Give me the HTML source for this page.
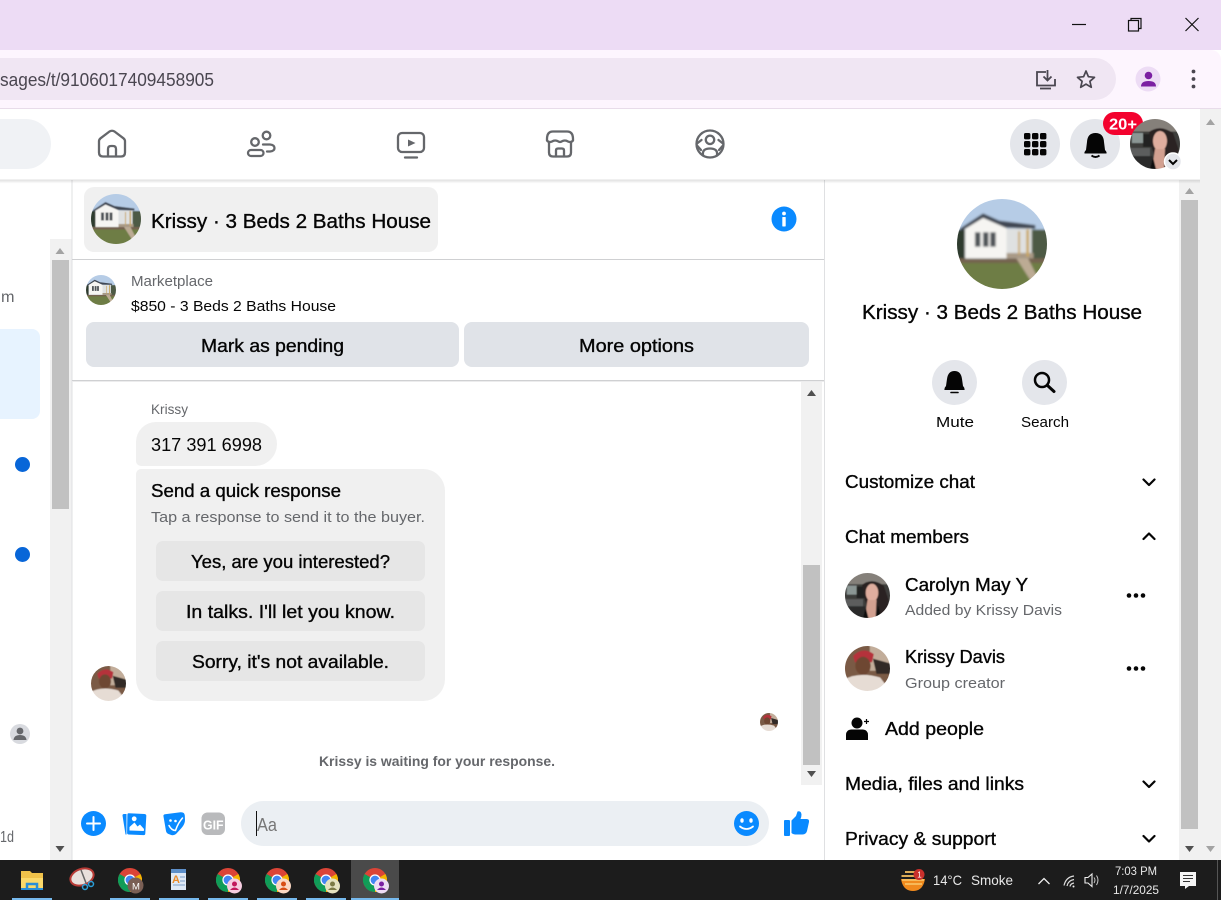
<!DOCTYPE html>
<html><head><meta charset="utf-8"><title>Messenger</title>
<style>
html,body{margin:0;padding:0;width:1221px;height:900px;overflow:hidden;background:#fff}
svg{display:block}
text{font-family:"Liberation Sans",sans-serif;fill:#050505}
.sb{stroke:#050505;stroke-width:.35}
.g{fill:#65676b}
.w{fill:#fff}
</style></head><body>
<svg width="1221" height="900" viewBox="0 0 1221 900" xmlns="http://www.w3.org/2000/svg">
<defs>
<clipPath id="cc"><circle cx="50" cy="50" r="50"/></clipPath>
<filter id="soft" x="-10%" y="-10%" width="120%" height="120%"><feGaussianBlur stdDeviation="1.3"/></filter>
<linearGradient id="shadow" x1="0" y1="0" x2="0" y2="1"><stop offset="0" stop-color="#000" stop-opacity=".13"/><stop offset="1" stop-color="#000" stop-opacity="0"/></linearGradient>
<symbol id="house" viewBox="0 0 100 100"><g clip-path="url(#cc)"><g filter="url(#soft)">
<rect x="-5" y="-5" width="110" height="110" fill="#b6cce6"/>
<rect x="80" y="34" width="25" height="34" fill="#4e5a45"/>
<rect x="-5" y="34" width="14" height="34" fill="#2f3a2e"/>
<rect x="-5" y="69" width="110" height="36" fill="#6e7d44"/>
<rect x="-5" y="66" width="110" height="5" fill="#75634f"/>
<polygon points="66,66 79,66 90,88 82,91" fill="#bcab94"/>
<polygon points="9,32 29,19 55,31 55,66 9,66" fill="#f6f5f2"/>
<polygon points="3,33 29,16 47,24 87,29 87,33 54,32 29,21 6,35" fill="#3f4653"/>
<rect x="55" y="33" width="28" height="27" fill="#dfe1e1"/>
<rect x="55" y="60" width="30" height="6" fill="#a99a86"/>
<rect x="20" y="37" width="6" height="16" fill="#4f5459"/><rect x="29" y="37" width="6" height="16" fill="#4f5459"/><rect x="37" y="37" width="6" height="16" fill="#4f5459"/>
<rect x="77" y="34" width="3" height="30" fill="#c9a661"/>
<rect x="68" y="36" width="2" height="26" fill="#c9a661"/>
</g></g></symbol>
<symbol id="carolyn" viewBox="0 0 100 100"><g clip-path="url(#cc)"><g filter="url(#soft)">
<rect x="-5" y="-5" width="110" height="110" fill="#3d3c3b"/>
<rect x="-5" y="-5" width="110" height="30" fill="#85807a"/>
<rect x="4" y="28" width="22" height="20" fill="#8b9694"/>
<rect x="26" y="30" width="18" height="26" fill="#222"/>
<rect x="-5" y="58" width="45" height="16" fill="#5c5d5d"/>
<rect x="-5" y="74" width="50" height="32" fill="#2a2a2a"/>
<path d="M38 26Q60 10 86 28L97 60 94 80 72 100H60L44 60Z" fill="#2a2220"/>
<ellipse cx="60" cy="44" rx="14" ry="20" fill="#dfad9e"/>
<path d="M50 60H70L68 100H44Z" fill="#d2a090"/>
<path d="M40 100L46 76 52 100Z" fill="#111"/>
<path d="M68 100L74 72 80 100Z" fill="#111"/>
</g></g></symbol>
<symbol id="krissy" viewBox="0 0 100 100"><g clip-path="url(#cc)"><g filter="url(#soft)">
<rect x="-5" y="-5" width="110" height="110" fill="#7a5a44"/>
<rect x="55" y="-5" width="50" height="60" fill="#c2ad9a"/>
<path d="M62 28L105 40 105 62 70 62Z" fill="#332a25"/>
<path d="M18 22Q40 0 64 18L60 36H22Z" fill="#b5303a"/>
<ellipse cx="40" cy="44" rx="17" ry="20" fill="#6e4632"/>
<path d="M-5 76Q30 56 78 70L105 105H-5Z" fill="#e6dcd4"/>
</g></g></symbol>
<symbol id="chrome" viewBox="0 0 24 24">
<circle cx="12" cy="12" r="12" fill="#db4437"/>
<path d="M12 12L1.6 18A12 12 0 0 0 12 24Z" fill="#0f9d58"/>
<path d="M1.6 18A12 12 0 0 1 1.6 6L12 12Z" fill="#0f9d58"/>
<path d="M12 12L22.4 6A12 12 0 0 1 12 24Z" fill="#f4b400"/>
<circle cx="12" cy="12" r="5.6" fill="#fff"/><circle cx="12" cy="12" r="4.4" fill="#4285f4"/>
</symbol>
</defs>

<!-- chrome frame -->
<rect width="1221" height="50" fill="#eddcf5"/>
<path d="M0 50H1211a10 10 0 0 1 10 10V108H0Z" fill="#fdf5fe"/>
<rect y="108" width="1221" height="1" fill="#e8dcea"/>
<path d="M0 58H1095a21 21 0 0 1 0 42H0Z" fill="#f0e6f3"/>
<text x="0" y="86" font-size="18" textLength="214" lengthAdjust="spacingAndGlyphs" style="fill:#4a4650">sages/t/9106017409458905</text>
<path d="M1072 24.500H1086" stroke="#111" stroke-width="1.200"/>
<rect x="1128.500" y="20.500" width="10" height="10.500" fill="none" stroke="#111" stroke-width="1.200"/>
<path d="M1131 20V18.500H1141V28.500H1139" fill="none" stroke="#111" stroke-width="1.200"/>
<path d="M1185.500 18L1198.500 31M1198.500 18L1185.500 31" stroke="#111" stroke-width="1.200"/>
<path d="M1046 72H1037V85.500H1055V79" fill="none" stroke="#4a4650" stroke-width="1.800"/>
<path d="M1040 88.500H1051" stroke="#4a4650" stroke-width="1.800"/>
<path d="M1047.500 70V80M1043.500 76.500L1047.500 80.500 1051.500 76.500" fill="none" stroke="#4a4650" stroke-width="1.800"/>
<path d="M1086 71L1088.400 76.700 1094.500 77.300 1089.900 81.300 1091.300 87.300 1086 84.100 1080.700 87.300 1082.100 81.300 1077.500 77.300 1083.600 76.700Z" fill="none" stroke="#4a4650" stroke-width="1.700" stroke-linejoin="round"/>
<circle cx="1148" cy="79" r="12.500" fill="#eddcf5"/>
<circle cx="1148.500" cy="75.500" r="3.800" fill="#7b1fa2"/>
<path d="M1141 86.500Q1141 81 1148.500 81T1156 86.500Z" fill="#7b1fa2"/>
<circle cx="1193.500" cy="71.500" r="1.900" fill="#4a4650"/><circle cx="1193.500" cy="79" r="1.900" fill="#4a4650"/><circle cx="1193.500" cy="86.500" r="1.900" fill="#4a4650"/>

<!-- page scrollbar -->
<rect x="1200" y="109" width="21" height="751" fill="#f1f1f1"/>
<path d="M1206 125L1210.500 119 1215 125Z" fill="#a3a3a3"/>
<path d="M1206 846L1210.500 852 1215 846Z" fill="#a3a3a3"/>

<!-- left column -->
<rect x="50" y="239" width="21.500" height="621" fill="#f1f1f1"/>
<rect x="52" y="260" width="17" height="249" fill="#c1c1c1"/>
<path d="M55.500 254L60 248 64.500 254Z" fill="#a3a3a3"/>
<path d="M55.500 846L60 852 64.500 846Z" fill="#505050"/>
<rect x="71.500" y="180" width="1" height="680" fill="#dfe0e2"/>
<path d="M0 329H32a8 8 0 0 1 8 8V411a8 8 0 0 1-8 8H0Z" fill="#e7f3ff"/>
<circle cx="22.500" cy="464.500" r="7.500" fill="#0866d8"/>
<circle cx="22.500" cy="554.500" r="7.500" fill="#0866d8"/>
<circle cx="20" cy="734" r="10" fill="#d8dadf"/>
<circle cx="20" cy="731" r="3.400" fill="#65676b"/>
<path d="M13.500 740Q14 735 20 735T26.500 740Z" fill="#65676b"/>
<text x="1" y="302" font-size="16" textLength="13.500" lengthAdjust="spacingAndGlyphs" class="g">m</text>
<text x="0" y="842" font-size="16" textLength="14" lengthAdjust="spacingAndGlyphs" class="g">1d</text>

<!-- top nav -->
<rect x="0" y="109" width="1200" height="70.500" fill="#fff"/>
<path d="M0 119H26a25 25 0 0 1 0 50H0Z" fill="#f0f2f5"/>
<g fill="none" stroke="#65676b" stroke-width="2.300" stroke-linejoin="round" stroke-linecap="round">
<path d="M99 141.500Q99 139.500 100.500 138.300L109.500 131.500Q112 130 114.500 131.500L123.500 138.300Q125 139.500 125 141.500V152.500Q125 156.500 121 156.500H103Q99 156.500 99 152.500Z"/>
<path d="M108 156.500V149Q108 146 111 146H113Q116 146 116 149V156.500"/>
<circle cx="266.500" cy="135.500" r="3.800"/>
<circle cx="255" cy="142" r="3.800"/>
<rect x="248" y="150" width="15.500" height="6" rx="3"/>
<path d="M263 144.500H270Q274.500 145 274.500 148T270 151.500H267"/>
<rect x="398" y="133" width="26" height="19" rx="4"/>
<path d="M405 157.500H417"/>
<path d="M547 139Q547 131.500 553 131.500H567Q573 131.500 573 139V140.500Q571 143 568 141.500Q565 139.500 561.500 141.500Q560 142.500 558.500 141.500Q555 139.500 552 141.500Q549 143 547 140.500Z"/>
<path d="M549 143V152.500Q549 156.500 553 156.500H567Q571 156.500 571 152.500V143"/>
<path d="M556 156.500V150.500Q556 148.500 558 148.500H562Q564 148.500 564 150.500V156.500"/>
<circle cx="710" cy="144" r="13.500"/>
<circle cx="710" cy="139.800" r="4.200"/>
<path d="M703 155Q702 148.500 710 148.500T717 155"/>
<path d="M697 143.500L701.500 140M723 143.500L718.500 140M697 145.500L701 150M723 145.500L719 150"/>
</g>
<path d="M408 139.500L415.500 143 408 146.500Z" fill="#65676b"/>
<circle cx="1035" cy="144" r="25" fill="#e4e6eb"/>
<g fill="#050505">
<rect x="1024" y="133" width="6.400" height="6.400" rx="1.600"/><rect x="1032" y="133" width="6.400" height="6.400" rx="1.600"/><rect x="1040" y="133" width="6.400" height="6.400" rx="1.600"/>
<rect x="1024" y="141" width="6.400" height="6.400" rx="1.600"/><rect x="1032" y="141" width="6.400" height="6.400" rx="1.600"/><rect x="1040" y="141" width="6.400" height="6.400" rx="1.600"/>
<rect x="1024" y="149" width="6.400" height="6.400" rx="1.600"/><rect x="1032" y="149" width="6.400" height="6.400" rx="1.600"/><rect x="1040" y="149" width="6.400" height="6.400" rx="1.600"/>
</g>
<circle cx="1095" cy="144" r="25" fill="#e4e6eb"/>
<path d="M1095.500 133Q1103.500 133 1104 142L1105 150Q1107 152 1106.500 153.500H1084.500Q1084 152 1086 150L1087 142Q1087.500 133 1095.500 133Z" fill="#050505"/>
<path d="M1091.500 155.500Q1095.500 158.500 1099.500 155.500" fill="none" stroke="#050505" stroke-width="2"/>
<rect x="1103" y="112" width="40" height="23" rx="11.500" fill="#f3022e"/>
<use href="#carolyn" x="1130" y="119" width="50" height="50"/>
<text x="1109" y="129.500" font-size="16" font-weight="700" textLength="28" lengthAdjust="spacingAndGlyphs" class="w">20+</text>
<circle cx="1173" cy="161.500" r="8.500" fill="#e4e6eb" stroke="#fff" stroke-width="1.500"/>
<path d="M1169 160L1173 164 1177 160" fill="none" stroke="#050505" stroke-width="2"/>

<!-- chat header -->
<rect x="84" y="187" width="354" height="65" rx="10" fill="#f0f0f0"/>
<use href="#house" x="91" y="194" width="50" height="50"/>
<text x="151" y="228" font-size="20" textLength="280" lengthAdjust="spacingAndGlyphs" class="sb">Krissy · 3 Beds 2 Baths House</text>
<circle cx="784" cy="219" r="12.500" fill="#0a8aff"/>
<circle cx="784" cy="213.500" r="1.900" fill="#fff"/>
<rect x="782.300" y="217" width="3.400" height="9.500" rx=".6" fill="#fff"/>
<rect x="72" y="259" width="752" height="1" fill="#cfd0d2"/>
<use href="#house" x="86" y="275" width="30" height="30"/>
<text x="131" y="286" font-size="14.500" textLength="82" lengthAdjust="spacingAndGlyphs" class="g">Marketplace</text>
<text x="131" y="311" font-size="15" textLength="205" lengthAdjust="spacingAndGlyphs">$850 - 3 Beds 2 Baths House</text>
<rect x="86" y="322" width="373" height="45" rx="8" fill="#e0e3e8"/>
<rect x="464" y="322" width="345" height="45" rx="8" fill="#e0e3e8"/>
<text x="201" y="352" font-size="18" textLength="143" lengthAdjust="spacingAndGlyphs" class="sb">Mark as pending</text>
<text x="579" y="352" font-size="18" textLength="115" lengthAdjust="spacingAndGlyphs" class="sb">More options</text>
<rect x="72" y="380" width="752" height="1" fill="#cfd0d2"/>
<rect x="72" y="381" width="752" height="1" fill="#ececed"/>
<rect x="824" y="180" width="1" height="680" fill="#dfe0e2"/>

<!-- messages -->
<rect x="801" y="382" width="21" height="403" fill="#f1f1f1"/>
<rect x="803" y="565" width="17" height="200" fill="#c1c1c1"/>
<path d="M807 396L811.500 390 816 396Z" fill="#505050"/>
<path d="M807 771L811.500 777 816 771Z" fill="#505050"/>
<text x="151" y="414" font-size="14" textLength="37" lengthAdjust="spacingAndGlyphs" class="g">Krissy</text>
<path d="M156 422H255a22 22 0 0 1 0 44H141a5 5 0 0 1-5-5V442a20 20 0 0 1 20-20Z" fill="#f0f0f0"/>
<text x="151" y="451" font-size="18" textLength="111" lengthAdjust="spacingAndGlyphs">317 391 6998</text>
<path d="M141 469H423a22 22 0 0 1 22 22V679a22 22 0 0 1-22 22H158a22 22 0 0 1-22-22V474a5 5 0 0 1 5-5Z" fill="#f0f0f0"/>
<text x="151" y="497" font-size="18" textLength="190" lengthAdjust="spacingAndGlyphs" class="sb">Send a quick response</text>
<text x="151" y="522" font-size="15" textLength="274" lengthAdjust="spacingAndGlyphs" class="g">Tap a response to send it to the buyer.</text>
<rect x="156" y="541" width="269" height="40" rx="7" fill="#e6e6e6"/>
<rect x="156" y="591" width="269" height="40" rx="7" fill="#e6e6e6"/>
<rect x="156" y="641" width="269" height="40" rx="7" fill="#e6e6e6"/>
<text x="191" y="568" font-size="18" textLength="199" lengthAdjust="spacingAndGlyphs" class="sb">Yes, are you interested?</text>
<text x="186" y="618" font-size="18" textLength="209" lengthAdjust="spacingAndGlyphs" class="sb">In talks. I'll let you know.</text>
<text x="192" y="668" font-size="18" textLength="197" lengthAdjust="spacingAndGlyphs" class="sb">Sorry, it's not available.</text>
<use href="#krissy" x="91" y="666" width="35" height="35"/>
<use href="#krissy" x="760" y="713" width="18" height="18"/>
<text x="319" y="766" font-size="14" font-weight="700" textLength="236" lengthAdjust="spacingAndGlyphs" class="g">Krissy is waiting for your response.</text>

<!-- composer -->
<circle cx="93.500" cy="823.500" r="12.500" fill="#0a8aff"/>
<path d="M93.500 817V830M87 823.500H100" stroke="#fff" stroke-width="2" stroke-linecap="round"/>
<path d="M122.500 815.500Q122.500 814 124 814H126.500V834.500L125.500 834.500Z" fill="#0a8aff"/>
<path d="M128.800 813.300L144.500 814Q146.500 814.200 146.300 816L145.300 833.500Q145.200 835.200 143.500 835.100L128.500 834.500Q127 834.400 127.100 832.800L127.400 814.800Q127.400 813.200 128.800 813.300Z" fill="#0a8aff"/>
<circle cx="134.200" cy="818.800" r="2.400" fill="#fff"/>
<path d="M129.500 827L134.500 822.500 137.500 826.500 140 824.500 144 829 143.800 831 129.500 830.500Z" fill="#fff"/>
<path d="M163.500 816.500Q163 814.500 165 814.200L180.500 812.300Q184.500 812 184.800 815.500L185 820Q185 824 181.500 828L176 834Q173.500 836 170.500 834.800L168.500 834Q166.500 833.300 166 831Z" fill="#0a8aff"/>
<circle cx="170.500" cy="820.500" r="1.300" fill="#fff"/><circle cx="175.500" cy="821" r="1.300" fill="#fff"/>
<path d="M169 825.500Q171.500 830.500 175.500 830.500Q178 823 182.500 818" fill="none" stroke="#fff" stroke-width="1.500" stroke-linecap="round"/>
<rect x="201.500" y="812.500" width="23.500" height="22.500" rx="6" fill="#b9babc"/>
<text x="203" y="829.500" font-size="13" font-weight="700" textLength="20.500" lengthAdjust="spacingAndGlyphs" class="w">GIF</text>
<rect x="241" y="801" width="528" height="45" rx="22.500" fill="#ebeff3"/>
<rect x="256" y="811" width="1" height="25" fill="#111"/>
<text x="257" y="831" font-size="18" textLength="20" lengthAdjust="spacingAndGlyphs" style="fill:#777">Aa</text>
<circle cx="746.500" cy="823.500" r="12.500" fill="#0a8aff"/>
<ellipse cx="742" cy="820.500" rx="1.700" ry="2.300" fill="#fff"/><ellipse cx="751" cy="820.500" rx="1.700" ry="2.300" fill="#fff"/>
<path d="M740 826.500Q746.500 831.500 753 826.500" fill="none" stroke="#fff" stroke-width="1.800" stroke-linecap="round"/>
<rect x="784" y="820" width="6" height="16" rx="1" fill="#0a8aff"/>
<path d="M791.500 820.500L796 816Q797 813 797.500 811.500Q801 810.500 801.500 814.500Q801.500 817 800.500 819H806.500Q809.500 819 809 822L807 831Q806 834.500 802.500 834.500H795Q793 834.500 791.500 833Z" fill="#0a8aff"/>

<!-- right panel -->
<rect x="1179" y="180" width="21" height="680" fill="#f1f1f1"/>
<rect x="1181" y="200" width="17" height="629" fill="#c1c1c1"/>
<path d="M1185 194L1189.500 188 1194 194Z" fill="#a3a3a3"/>
<path d="M1185 846L1189.500 852 1194 846Z" fill="#505050"/>
<use href="#house" x="957" y="199" width="90" height="90"/>
<text x="862" y="319" font-size="20" textLength="280" lengthAdjust="spacingAndGlyphs" class="sb">Krissy · 3 Beds 2 Baths House</text>
<circle cx="954.500" cy="382.500" r="22.500" fill="#e4e6eb"/>
<path d="M954.500 371Q961 371 962 379L963 386Q965 388 964.500 390H944.500Q944 388 946 386L947 379Q948 371 954.500 371Z" fill="#050505"/>
<path d="M951 392.500H958" stroke="#050505" stroke-width="1.600" stroke-linecap="round"/>
<circle cx="1044.500" cy="382.500" r="22.500" fill="#e4e6eb"/>
<circle cx="1042" cy="380" r="7" fill="none" stroke="#050505" stroke-width="2.500"/>
<path d="M1047.500 385.500L1054 391.500" stroke="#050505" stroke-width="3" stroke-linecap="round"/>
<text x="936" y="427" font-size="15" textLength="38" lengthAdjust="spacingAndGlyphs">Mute</text>
<text x="1021" y="427" font-size="15" textLength="48" lengthAdjust="spacingAndGlyphs">Search</text>

<text x="845" y="488" font-size="18" textLength="130" lengthAdjust="spacingAndGlyphs" class="sb">Customize chat</text>
<path d="M1143.500 479.500L1149 485 1154.500 479.500" fill="none" stroke="#050505" stroke-width="2.200" stroke-linecap="round" stroke-linejoin="round"/>
<text x="845" y="543" font-size="18" textLength="124" lengthAdjust="spacingAndGlyphs" class="sb">Chat members</text>
<path d="M1143.500 539L1149 533.500 1154.500 539" fill="none" stroke="#050505" stroke-width="2.200" stroke-linecap="round" stroke-linejoin="round"/>

<use href="#carolyn" x="845" y="573" width="45" height="45"/>
<text x="905" y="591" font-size="18" textLength="123" lengthAdjust="spacingAndGlyphs" class="sb">Carolyn May Y</text>
<text x="905" y="615" font-size="15" textLength="157" lengthAdjust="spacingAndGlyphs" class="g">Added by Krissy Davis</text>
<circle cx="1129" cy="595.500" r="2.300" fill="#050505"/><circle cx="1136" cy="595.500" r="2.300" fill="#050505"/><circle cx="1143" cy="595.500" r="2.300" fill="#050505"/>
<use href="#krissy" x="845" y="646" width="45" height="45"/>
<text x="905" y="663" font-size="18" textLength="100" lengthAdjust="spacingAndGlyphs" class="sb">Krissy Davis</text>
<text x="905" y="688" font-size="15" textLength="100" lengthAdjust="spacingAndGlyphs" class="g">Group creator</text>
<circle cx="1129" cy="668.500" r="2.300" fill="#050505"/><circle cx="1136" cy="668.500" r="2.300" fill="#050505"/><circle cx="1143" cy="668.500" r="2.300" fill="#050505"/>
<circle cx="857" cy="723" r="5.500" fill="#050505"/>
<path d="M846 740V735Q846 730 851 729.500H863Q868 730 868 735V740Z" fill="#050505"/>
<path d="M864 721.500H869M866.500 719V724" stroke="#050505" stroke-width="1.200"/>
<text x="885" y="735" font-size="18" textLength="99" lengthAdjust="spacingAndGlyphs" class="sb">Add people</text>
<text x="845" y="790" font-size="18" textLength="179" lengthAdjust="spacingAndGlyphs" class="sb">Media, files and links</text>
<path d="M1143.500 781.500L1149 787 1154.500 781.500" fill="none" stroke="#050505" stroke-width="2.200" stroke-linecap="round" stroke-linejoin="round"/>
<text x="845" y="845" font-size="18" textLength="151" lengthAdjust="spacingAndGlyphs" class="sb">Privacy &amp; support</text>
<path d="M1143.500 836L1149 841.500 1154.500 836" fill="none" stroke="#050505" stroke-width="2.200" stroke-linecap="round" stroke-linejoin="round"/>

<!-- nav shadow -->
<rect x="0" y="179.500" width="1200" height="4" fill="url(#shadow)"/>

<!-- taskbar -->
<rect y="860" width="1221" height="40" fill="#1c1c1c"/>
<rect x="351" y="860" width="48" height="40" fill="#4a4a4a"/>
<g fill="#76b9ed">
<rect x="12" y="898" width="40" height="2"/><rect x="110" y="898" width="40" height="2"/><rect x="159" y="898" width="40" height="2"/><rect x="208" y="898" width="40" height="2"/><rect x="257" y="898" width="40" height="2"/><rect x="306" y="898" width="40" height="2"/><rect x="351" y="898" width="48" height="2"/>
</g>
<path d="M21 871H30L32 873H43V889H21Z" fill="#f0c24a"/>
<rect x="21" y="878" width="22" height="11" fill="#fbd96a"/>
<path d="M27 889V884H37V889" fill="none" stroke="#2a8fd8" stroke-width="2.500"/>
<rect x="21" y="888" width="22" height="2" fill="#2a8fd8"/>
<ellipse cx="82" cy="877" rx="12" ry="8" transform="rotate(-20 82 877)" fill="#e8e0dc" stroke="#b73a35" stroke-width="2"/>
<path d="M81 870L86 883" stroke="#666" stroke-width="1.500"/>
<circle cx="85" cy="887" r="2.500" fill="none" stroke="#2b9ed8" stroke-width="1.500"/><circle cx="91" cy="884" r="2.500" fill="none" stroke="#2b9ed8" stroke-width="1.500"/>
<use href="#chrome" x="118" y="868" width="24" height="24"/>
<circle cx="135.500" cy="885.500" r="8" fill="#7a5f55"/>
<text x="132" y="889.500" font-size="9.500" class="w">M</text>
<rect x="171" y="869" width="15" height="21" fill="#dfe9f6"/>
<rect x="171" y="869" width="15" height="4" fill="#5d8fc9"/>
<text x="172" y="883" font-size="11" font-weight="700" style="fill:#e98b2a">A</text>
<path d="M180 877H185M180 881H185M173 885H185" stroke="#7da0c8" stroke-width="1"/>
<use href="#chrome" x="216" y="868" width="24" height="24"/>
<circle cx="234.500" cy="886" r="7.500" fill="#f6cde0"/><circle cx="234.500" cy="884" r="2.500" fill="#c2185b"/><path d="M230 890Q234.500 885 239 890Z" fill="#c2185b"/>
<use href="#chrome" x="265" y="868" width="24" height="24"/>
<circle cx="283.500" cy="886" r="7.500" fill="#fbd9c4"/><circle cx="283.500" cy="884" r="2.500" fill="#d84e14"/><path d="M279 890Q283.500 885 288 890Z" fill="#d84e14"/>
<use href="#chrome" x="314" y="868" width="24" height="24"/>
<circle cx="332.500" cy="886" r="7.500" fill="#e5e2c0"/><circle cx="332.500" cy="884" r="2.500" fill="#7c7a45"/><path d="M328 890Q332.500 885 337 890Z" fill="#7c7a45"/>
<use href="#chrome" x="363" y="868" width="24" height="24"/>
<circle cx="381.500" cy="886" r="7.500" fill="#eddcf5"/><circle cx="381.500" cy="884" r="2.500" fill="#7b1fa2"/><path d="M377 890Q381.500 885 386 890Z" fill="#7b1fa2"/>
<path d="M901 879Q903 891 913 891T925 879Z" fill="#f08a1d"/>
<path d="M905 872H915M901.500 876H922M902 880H924M905 884H922" stroke="#f8c060" stroke-width="1.800"/>
<circle cx="919" cy="874.500" r="5.500" fill="#c9302c"/>
<text x="917.300" y="877.500" font-size="8" class="w">1</text>
<text x="933" y="885" font-size="14" textLength="29" lengthAdjust="spacingAndGlyphs" style="fill:#e8e8e8">14°C</text>
<text x="971" y="885" font-size="14" textLength="42" lengthAdjust="spacingAndGlyphs" style="fill:#e8e8e8">Smoke</text>
<path d="M1038.500 884L1044 878.500 1049.500 884" fill="none" stroke="#eee" stroke-width="1.300"/>
<path d="M1064 885.500Q1066 877 1074 876M1067 886Q1068 880.500 1074 879.500M1070 886.500Q1070.500 883.500 1074 883" fill="none" stroke="#ddd" stroke-width="1.200"/>
<circle cx="1073.500" cy="886.500" r="1" fill="#eee"/>
<path d="M1085 877.500H1088L1092 874V886.500L1088 883H1085Z" fill="none" stroke="#eee" stroke-width="1.100"/>
<path d="M1094 877.500Q1096 880 1094 883M1096.500 875.500Q1099.500 880 1096.500 885" fill="none" stroke="#ccc" stroke-width="1"/>
<text x="1115" y="875" font-size="12" textLength="42" lengthAdjust="spacingAndGlyphs" style="fill:#e8e8e8">7:03 PM</text>
<text x="1113" y="894" font-size="12" textLength="46" lengthAdjust="spacingAndGlyphs" style="fill:#e8e8e8">1/7/2025</text>
<path d="M1180 872H1196V886H1189L1185 889V886H1180Z" fill="#f4f4f4"/>
<path d="M1183 875.500H1193M1183 878.500H1193M1183 881.500H1190" stroke="#333" stroke-width="1"/>
<rect x="1217" y="860" width="1" height="40" fill="#555"/>
</svg>
</body></html>
